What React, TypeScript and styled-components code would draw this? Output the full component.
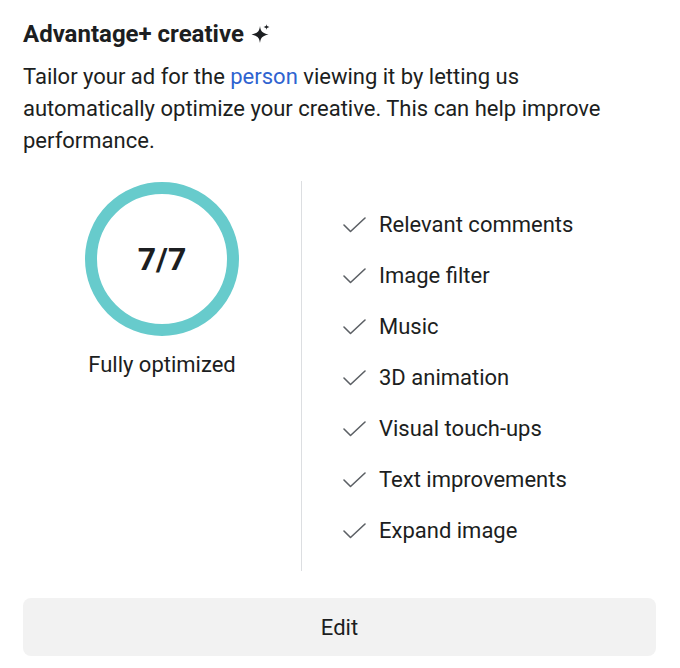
import React from 'react';
import styled, { createGlobalStyle } from 'styled-components';

const GlobalStyle = createGlobalStyle`
  body {
    margin: 0;
    background: #ffffff;
    font-family: Roboto, "Liberation Sans", Arial, sans-serif;
    color: #1c1e21;
  }
`;

const features = [
  'Relevant comments',
  'Image filter',
  'Music',
  '3D animation',
  'Visual touch-ups',
  'Text improvements',
  'Expand image',
];

const Panel = styled.div`
  width: 680px;
  box-sizing: border-box;
  padding: 20px 24px 12px 23px;
`;

const Title = styled.h2`
  display: flex;
  align-items: center;
  gap: 7px;
  margin: 0;
  font-size: 24px;
  line-height: 28px;
  font-weight: 700;
  color: #1c1e21;
`;

const Description = styled.p`
  margin: 13px 0 0;
  font-size: 22px;
  line-height: 32px;
  color: #1c1e21;
`;

const Link = styled.a`
  color: #2f63d0;
  text-decoration: none;
`;

const Summary = styled.div`
  display: grid;
  grid-template-columns: 278px 1px 1fr;
  margin-top: 24px;
`;

const ScoreColumn = styled.div`
  display: flex;
  flex-direction: column;
  align-items: center;
  padding-top: 1px;
`;

const Ring = styled.div`
  width: 154px;
  height: 154px;
  box-sizing: border-box;
  border: 12px solid #67cbcc;
  border-radius: 50%;
  display: flex;
  align-items: center;
  justify-content: center;
`;

const Score = styled.span`
  font-size: 32px;
  font-weight: 700;
  color: #1c1e21;
`;

const ScoreLabel = styled.div`
  margin-top: 16px;
  font-size: 22px;
  line-height: 26px;
`;

const Divider = styled.div`
  width: 1px;
  background: #dcdee1;
  height: 390px;
`;

const FeatureList = styled.ul`
  list-style: none;
  margin: 0;
  padding: 18px 0 0 41px;
`;

const FeatureRow = styled.li`
  display: flex;
  align-items: center;
  gap: 13px;
  height: 51px;
  font-size: 22px;
  color: #1c1e21;
`;

const EditButton = styled.button`
  display: block;
  width: 100%;
  height: 58px;
  margin-top: 27px;
  border: none;
  border-radius: 8px;
  background: #f2f2f2;
  font-family: inherit;
  font-size: 22px;
  color: #1c1e21;
  cursor: pointer;
`;

const Sparkle = () => (
  <svg width="20" height="20" viewBox="0 0 20 20" aria-hidden="true">
    <path
      d="M9 2 C9.8 7.6 11.1 8.9 17.5 10.5 C11.1 12.1 9.8 13.4 9 19 C8.2 13.4 6.9 12.1 0.5 10.5 C6.9 8.9 8.2 7.6 9 2 Z"
      fill="#1c1e21"
    />
    <path
      d="M15.5 0 C15.7 1.9 16.1 2.3 18.5 3 C16.1 3.7 15.7 4.1 15.5 6 C15.3 4.1 14.9 3.7 12.5 3 C14.9 2.3 15.3 1.9 15.5 0 Z"
      fill="#1c1e21"
    />
  </svg>
);

const Check = () => (
  <svg width="23" height="16" viewBox="0 0 23 16" aria-hidden="true">
    <path
      d="M1 8 L7.5 14.5 L22 1"
      fill="none"
      stroke="#5c6065"
      strokeWidth="1.6"
      strokeLinecap="round"
      strokeLinejoin="round"
    />
  </svg>
);

export default function App() {
  return (
    <>
      <GlobalStyle />
      <Panel>
        <Title>
          Advantage+ creative
          <Sparkle />
        </Title>
        <Description>
          Tailor your ad for the <Link href="#">person</Link> viewing it by letting us
          automatically optimize your creative. This can help improve performance.
        </Description>
        <Summary>
          <ScoreColumn>
            <Ring>
              <Score>7/7</Score>
            </Ring>
            <ScoreLabel>Fully optimized</ScoreLabel>
          </ScoreColumn>
          <Divider />
          <FeatureList>
            {features.map((f) => (
              <FeatureRow key={f}>
                <Check />
                {f}
              </FeatureRow>
            ))}
          </FeatureList>
        </Summary>
        <EditButton>Edit</EditButton>
      </Panel>
    </>
  );
}
